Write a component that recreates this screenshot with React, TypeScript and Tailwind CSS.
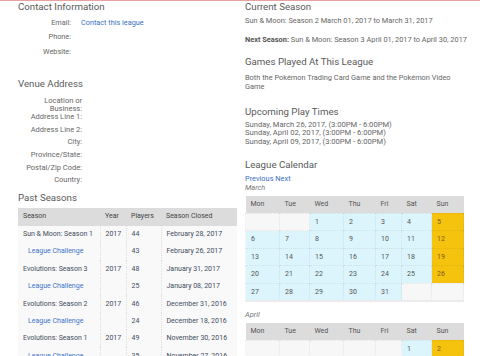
import React from "react";

const head = "text-[9.7px] leading-[12px] text-[#595959] font-normal";

function Calendar({ weeks }: { weeks: (number | null)[][] }) {
  const days = ["Mon", "Tue", "Wed", "Thu", "Fri", "Sat", "Sun"];
  const widths = ["w-[34px]", "w-[30px]", "w-[34px]", "w-[32px]", "w-[26px]", "w-[30px]", "w-[32px]"];
  return (
    <table className="w-[218px] table-fixed border-collapse border-b-2 border-[#ececec] text-[7px]">
      <colgroup>
        {widths.map((w, i) => (
          <col key={i} className={w} />
        ))}
      </colgroup>
      <thead>
        <tr className="h-[17.5px] bg-[#dcdcdc] text-[#555]">
          {days.map((d) => (
            <th key={d} className="pl-[5px] text-left font-normal">
              {d}
            </th>
          ))}
        </tr>
      </thead>
      <tbody>
        {weeks.map((w, ri) => (
          <tr key={ri} className="h-[17.6px]">
            {w.map((n, ci) => {
              const cls =
                n === null
                  ? "bg-[#f7f7f7]"
                  : ci === 6
                  ? "bg-[#f5c20d] text-[#7a5c12]"
                  : "bg-[#dcf4fc] text-[#555]";
              return (
                <td
                  key={ci}
                  className={`${cls} pl-[5px] border border-dotted border-[rgba(0,0,0,0.07)]`}
                >
                  {n ?? ""}
                </td>
              );
            })}
          </tr>
        ))}
      </tbody>
    </table>
  );
}

const seasons: { name: string; sub?: boolean; year?: string; players: string; closed: string }[] = [
  { name: "Sun & Moon: Season 1", year: "2017", players: "44", closed: "February 28, 2017" },
  { name: "League Challenge", sub: true, players: "43", closed: "February 26, 2017" },
  { name: "Evolutions: Season 3", year: "2017", players: "48", closed: "January 31, 2017" },
  { name: "League Challenge", sub: true, players: "25", closed: "January 08, 2017" },
  { name: "Evolutions: Season 2", year: "2017", players: "46", closed: "December 31, 2016" },
  { name: "League Challenge", sub: true, players: "24", closed: "December 18, 2016" },
  { name: "Evolutions: Season 1", year: "2017", players: "49", closed: "November 30, 2016" },
  { name: "League Challenge", sub: true, players: "35", closed: "November 27, 2016" },
];

export default function App() {
  const march: (number | null)[][] = [
    [null, null, 1, 2, 3, 4, 5],
    [6, 7, 8, 9, 10, 11, 12],
    [13, 14, 15, 16, 17, 18, 19],
    [20, 21, 22, 23, 24, 25, 26],
    [27, 28, 29, 30, 31, null, null],
  ];
  const april: (number | null)[][] = [[null, null, null, null, null, 1, 2]];
  const venue = [
    "Address Line 1:",
    "Address Line 2:",
    "City:",
    "Province/State:",
    "Postal/Zip Code:",
    "Country:",
  ];
  return (
    <div className="w-[480px] h-[356px] overflow-hidden bg-white font-['Roboto',sans-serif] text-[7px] text-[#666]">
      <div className="h-[1px] bg-[#e6a1a1]" />
      <div className="flex gap-[8px] pl-[18px]">
        {/* Left column */}
        <div className="w-[219px] shrink-0">
          <h2 className={head}>Contact Information</h2>
          <div className="mt-[3px] text-[7.3px]">
            {[
              ["Email:", "Contact this league"],
              ["Phone:", ""],
              ["Website:", ""],
            ].map(([l, v]) => (
              <div key={l} className="flex h-[14.5px] items-center">
                <div className="w-[53px] text-right">{l}</div>
                <div className="ml-[10px] text-[#3b6fc4]">{v}</div>
              </div>
            ))}
          </div>
          <h2 className={`${head} mt-[18.5px]`}>Venue Address</h2>
          <div className="mt-[7px] leading-[8px] text-[7.5px]">
            <div className="flex min-h-[12.7px]">
              <div className="w-[64px] text-right">
                Location or
                <br />
                Business:
              </div>
            </div>
            {venue.map((l) => (
              <div key={l} className="flex min-h-[12.7px]">
                <div className="w-[64px] text-right">{l}</div>
              </div>
            ))}
          </div>
          <h2 className={`${head} mt-[3px]`}>Past Seasons</h2>
          <table className="mt-[3.5px] w-[219px] table-fixed border-collapse text-[7px]">
            <colgroup>
              <col className="w-[82px]" />
              <col className="w-[26px]" />
              <col className="w-[35px]" />
              <col className="w-[76px]" />
            </colgroup>
            <thead>
              <tr className="h-[18px] bg-[#dcdcdc] text-[#444]">
                <th className="pl-[5px] text-left font-normal">Season</th>
                <th className="pl-[5px] text-left font-normal">Year</th>
                <th className="pl-[5px] text-left font-normal">Players</th>
                <th className="pl-[5px] text-left font-normal">Season Closed</th>
              </tr>
            </thead>
            <tbody>
              {seasons.map((s, i) => (
                <tr key={i} className="h-[17.4px] bg-[#f9f9f9] text-[#3f4d60]">
                  <td
                    className={`border-r border-dotted border-[#dedede] whitespace-nowrap ${
                      s.sub ? "pl-[10px] text-[#3f74c9]" : "pl-[5px]"
                    }`}
                  >
                    {s.name}
                  </td>
                  <td className="border-r border-dotted border-[#dedede] pl-[5px]">{s.year ?? ""}</td>
                  <td className="border-r border-dotted border-[#dedede] pl-[5px]">{s.players}</td>
                  <td className="pl-[5px] whitespace-nowrap">{s.closed}</td>
                </tr>
              ))}
            </tbody>
          </table>
        </div>

        {/* Right column */}
        <div className="w-[218px] shrink-0 text-[7.4px]">
          <h2 className={head}>Current Season</h2>
          <p className="mt-[2.5px] leading-[9px] whitespace-nowrap">
            Sun &amp; Moon: Season 2 March 01, 2017 to March 31, 2017
          </p>
          <p className="mt-[10.5px] leading-[9px] whitespace-nowrap">
            <span className="font-bold text-[#555]">Next Season:</span> Sun &amp; Moon: Season 3 April 01,
            2017 to April 30, 2017
          </p>
          <h2 className={`${head} mt-[12px]`}>Games Played At This League</h2>
          <p className="mt-[4.5px] leading-[9px]">
            Both the Pokémon Trading Card Game and the Pokémon Video
            <br />
            Game
          </p>
          <h2 className={`${head} mt-[15px]`}>Upcoming Play Times</h2>
          <div className="mt-[3px] leading-[8.5px] text-[7.6px]">
            <div>Sunday, March 26, 2017, (3:00PM - 6:00PM)</div>
            <div>Sunday, April 02, 2017, (3:00PM - 6:00PM)</div>
            <div>Sunday, April 09, 2017, (3:00PM - 6:00PM)</div>
          </div>
          <h2 className={`${head} mt-[12.5px]`}>League Calendar</h2>
          <div className="mt-[3px] leading-[9px] text-[#3b6fc4]">
            <span>Previous</span> <span>Next</span>
          </div>
          <div className="leading-[9px] italic text-[#777]">March</div>
          <div className="mt-[4px]">
            <Calendar weeks={march} />
          </div>
          <div className="mt-[8.5px] leading-[9px] italic text-[#777]">April</div>
          <div className="mt-[3.5px]">
            <Calendar weeks={april} />
          </div>
        </div>
      </div>
    </div>
  );
}
